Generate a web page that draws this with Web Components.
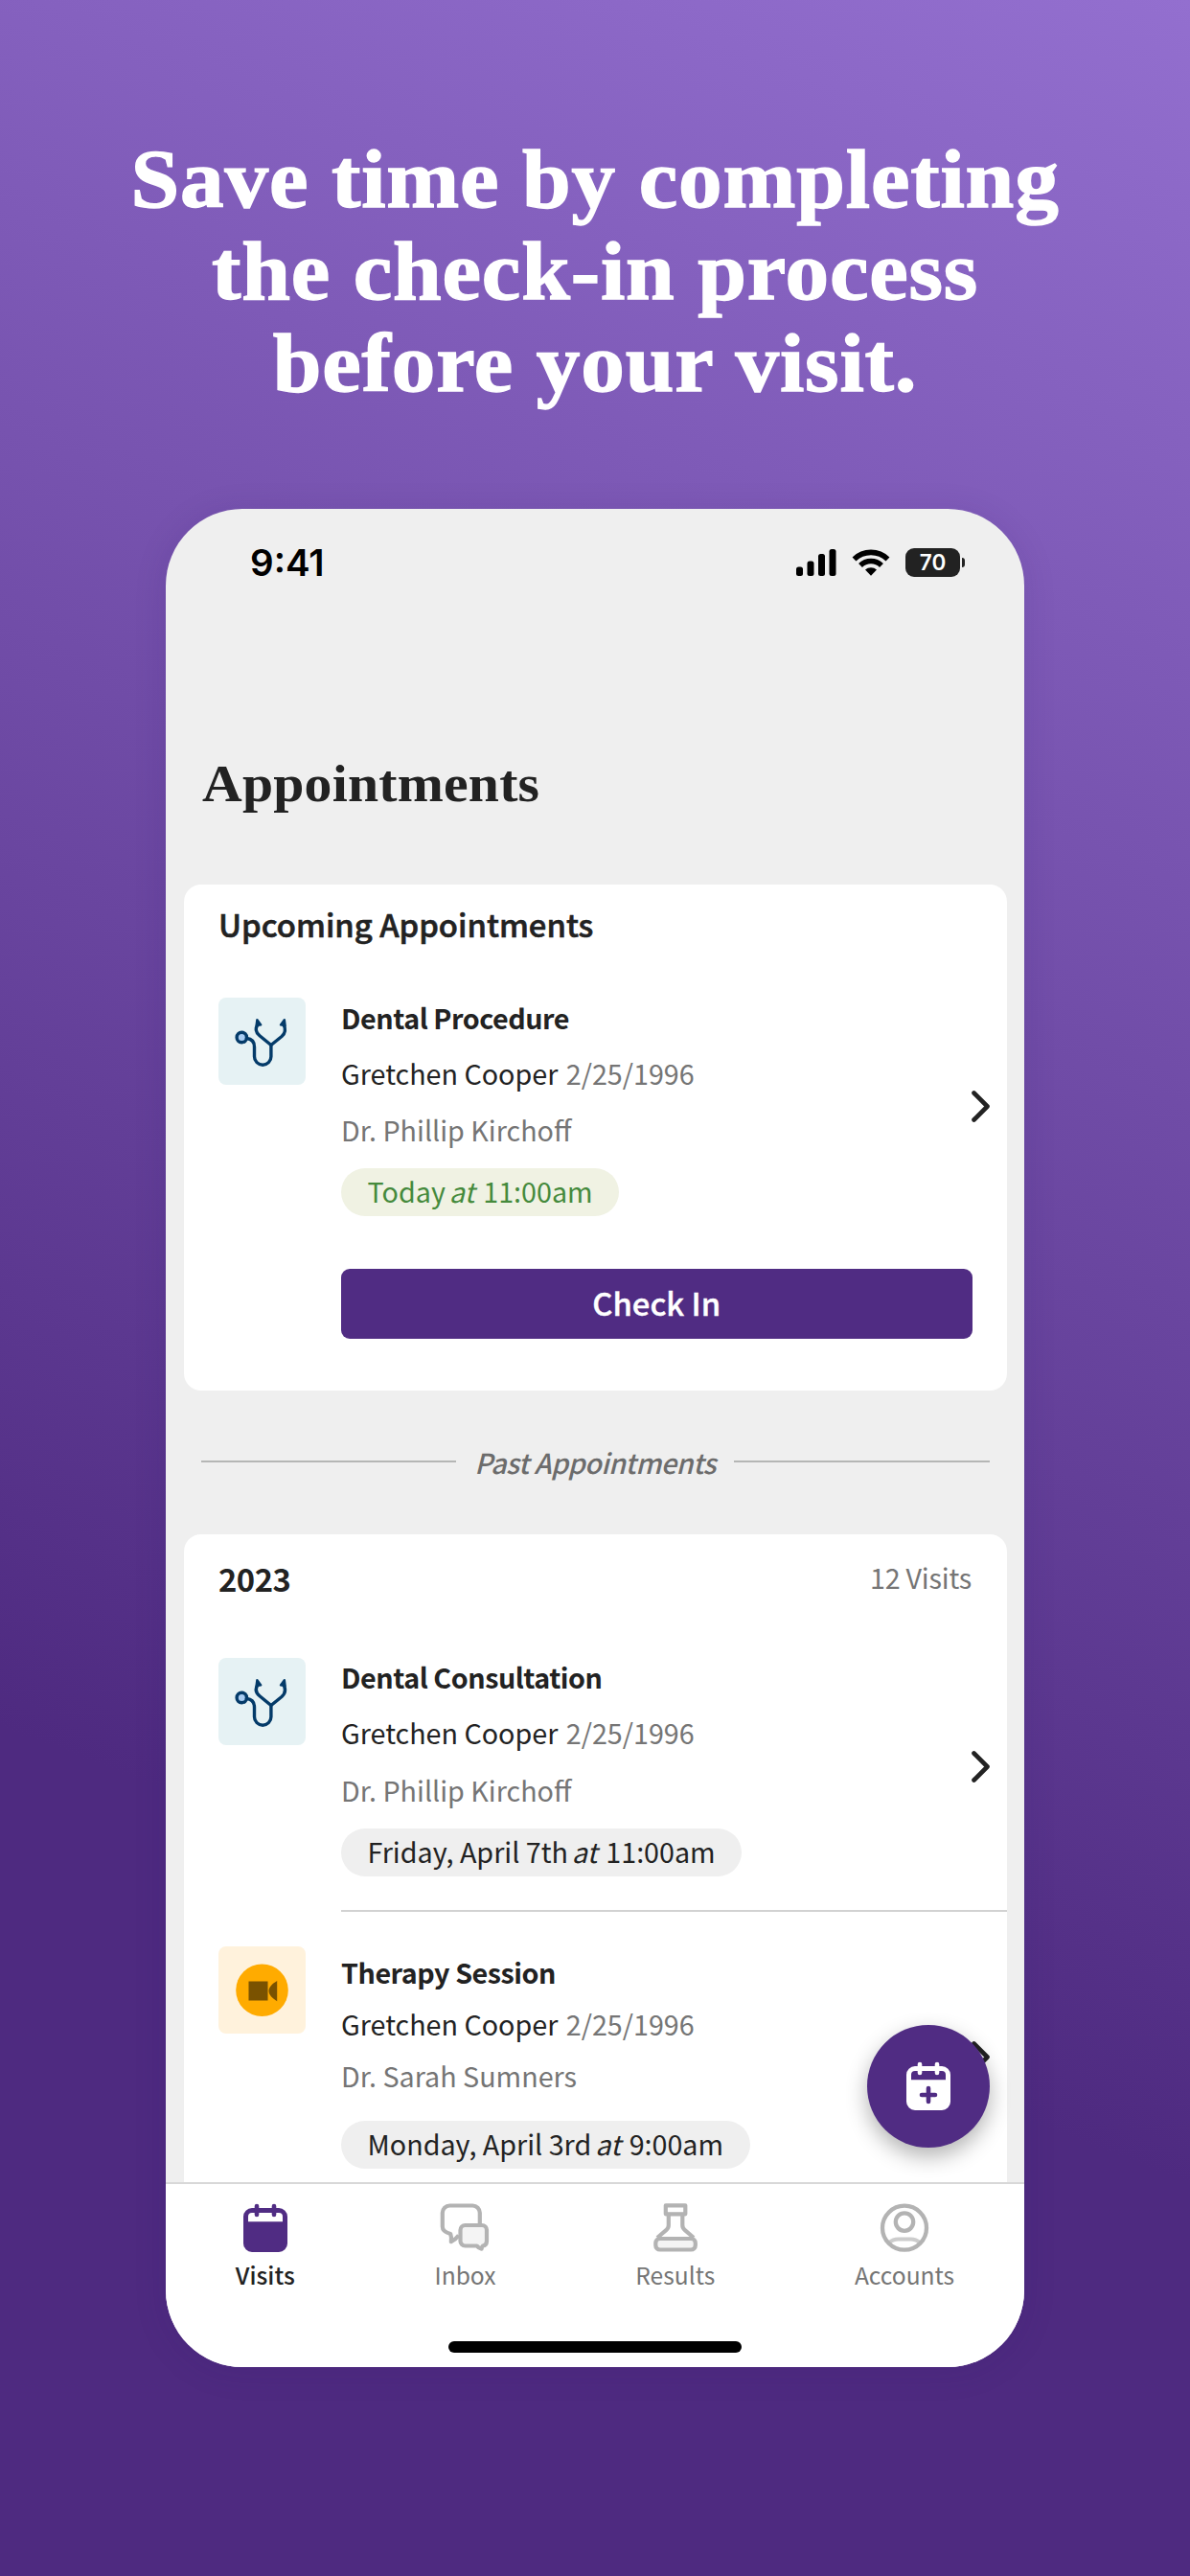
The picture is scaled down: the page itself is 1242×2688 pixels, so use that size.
<!DOCTYPE html>
<html lang="en">
<head>
<meta charset="utf-8">
<title>Appointments</title>
<style>
  body {
    margin: 0;
    font-family: "Noto Sans CJK SC", "Noto Sans CJK JP", "Open Sans", sans-serif;
  }
</style>
</head>
<body>
<promo-screen>
  <promo-headline slot="headline">Save time by completing<br>the check-in process<br>before your visit.</promo-headline>
  <phone-frame>
    <status-bar slot="status" time="9:41" battery="70"></status-bar>
    <page-title>Appointments</page-title>
    <visit-card heading="Upcoming Appointments">
      <visit-item kind="dental" name="Dental Procedure" patient="Gretchen Cooper" born="2/25/1996" doctor="Dr. Phillip Kirchoff">
        <time-pill slot="time" today>Today <i>at</i> 11:00am</time-pill>
      </visit-item>
      <action-button>Check In</action-button>
    </visit-card>
    <section-divider>Past Appointments</section-divider>
    <visit-card heading="2023" note="12 Visits" class="past">
      <visit-item kind="dental" name="Dental Consultation" patient="Gretchen Cooper" born="2/25/1996" doctor="Dr. Phillip Kirchoff">
        <time-pill slot="time">Friday, April 7th <i>at</i> 11:00am</time-pill>
      </visit-item>
      <visit-item kind="video" compact name="Therapy Session" patient="Gretchen Cooper" born="2/25/1996" doctor="Dr. Sarah Sumners">
        <time-pill slot="time">Monday, April 3rd <i>at</i> 9:00am</time-pill>
      </visit-item>
    </visit-card>
    <add-button slot="fab"></add-button>
    <tab-bar slot="tabs">
      <tab-item icon="calendar" active>Visits</tab-item>
      <tab-item icon="inbox">Inbox</tab-item>
      <tab-item icon="flask">Results</tab-item>
      <tab-item icon="person">Accounts</tab-item>
    </tab-bar>
  </phone-frame>
</promo-screen>

<script>
const calendar = `
  <path fill="currentColor" fill-rule="evenodd" d="M12 5h28a9 9 0 0 1 9 9v28a9 9 0 0 1-9 9H12a9 9 0 0 1-9-9V14a9 9 0 0 1 9-9Zm0 5a4 4 0 0 0-4 4v5.3h36V14a4 4 0 0 0-4-4Z"/>
  <path stroke="currentColor" stroke-width="4.6" stroke-linecap="round" d="M17 3v9M35 3v9"/>`;

const icons = {
  calendar,
  inbox: `
    <g stroke="currentColor" stroke-width="4.2" stroke-linejoin="round">
      <path d="M41.8 21V10a7.5 7.5 0 0 0-7.5-7.5h-24A7.5 7.5 0 0 0 2.8 10v14.5c0 4 3 6 8.4 7.5.9 2.5 1.2 5 .6 8.2 3-1.6 5.7-3.5 8-6.7"/>
      <path fill="#f4f4f4" d="M26.5 23h17.500a5 5 0 0 1 5 5v11.500a5 5 0 0 1-4 5c-1 1-1.400 1.700-1.400 3.200-2.100-.5-3.500-1.500-5-3.200H26.500a5 5 0 0 1-5-5V28a5 5 0 0 1 5-5Z"/>
    </g>`,
  flask: `
    <g stroke="currentColor" stroke-width="4.2" stroke-linejoin="round">
      <rect x="15.8" y="2.3" width="20.5" height="9"/>
      <path d="M18.8 12v11c0 2-.7 3.500-2.300 4.800L7 36M33.300 12v11c0 2 .7 3.500 2.300 4.800L45 36"/>
      <rect x="5.3" y="37" width="41.5" height="11.5" rx="4.5" fill="#f4f4f4"/>
    </g>`,
  person: `
    <path stroke="#ccc" stroke-width="4.2" d="M10.500 41c2.500-2.500 5-3.500 9-3.500h13c4 0 6.500 1 9 3.500"/>
    <circle cx="26" cy="25.7" r="23" stroke="currentColor" stroke-width="4.3"/>
    <circle cx="26" cy="19.6" r="9.2" stroke="currentColor" stroke-width="4.3"/>`
};

const tiles = {
  dental: `
    <rect x="2" y="3" width="91" height="91" rx="8" fill="#e6f2f4"/>
    <g fill="none" stroke="#043b69" stroke-width="3.4" stroke-linecap="round" stroke-linejoin="round">
      <circle cx="26.3" cy="44.5" r="5.2" fill="#a8ccf2"/>
      <path d="M31.500 45.500c5 .5 8 3.500 8 9V64.500a8.700 8.700 0 0 0 17.400 0V52.500"/>
      <path d="M43 31c-3.300 5-2 8.500 2 11.800L56.900 52.500 68 43.500c4-3.500 4.500-7.500 2-12.500"/>
      <path fill="#043b69" stroke-width="2.2" d="M42.300 26l4 5.400-4.800.8ZM70.900 26l-4 5.400 4.800.8Z"/>
    </g>`,
  video: `
    <rect x="2" y="3" width="91" height="91" rx="8" fill="#fff2dc"/>
    <circle cx="47.5" cy="48.8" r="27.3" fill="#ffab00"/>
    <path fill="#7a5200" d="M33.500 39.600h20v20h-20ZM63.200 39v21.200c-5-3-8.700-6.500-8.700-10.600s3.700-7.600 8.700-10.600Z"/>`
};

// Attaches an open shadow root holding the given markup
function render(host, css, html) {
  host.attachShadow({ mode: "open" });
  host.shadowRoot.innerHTML = `<style>${css}</style>${html}`;
}

class PromoScreen extends HTMLElement {
  connectedCallback() {
    render(this, `
      :host {
        display: flex;
        flex-direction: column;
        align-items: center;
        box-sizing: border-box;
        width: 1242px;
        height: 2688px;
        padding-top: 139px;
        overflow: hidden;
        background: linear-gradient(201deg, #936fcf, #4e2a80 72%);
      }
    `, `<slot name="headline"></slot><slot></slot>`);
  }
}

class PromoHeadline extends HTMLElement {
  connectedCallback() {
    render(this, `
      :host {
        display: block;
        height: 392px;
        color: #fff;
        font: bold 86px/96px "Liberation Serif", serif;
        letter-spacing: .8px;
        text-align: center;
        white-space: nowrap;
        transform: scaleX(1.06);
        -webkit-text-stroke: 1.4px #fff;
      }
    `, `<slot></slot>`);
  }
}

class PhoneFrame extends HTMLElement {
  connectedCallback() {
    render(this, `
      :host {
        display: flex;
        flex-direction: column;
        position: relative;
        width: 896px;
        height: 1939px;
        border-radius: 80px;
        overflow: hidden;
        background: #efefef;
        color: #222;
        box-shadow: 0 4px 34px rgba(50, 20, 100, .13);
      }
      main {
        flex: 1;
        min-height: 0;
        overflow: hidden;
        padding: 0 18.5px;
      }
    `, `
      <slot name="status"></slot>
      <main><slot></slot></main>
      <slot name="fab"></slot>
      <slot name="tabs"></slot>
    `);
  }
}

class StatusBar extends HTMLElement {
  connectedCallback() {
    render(this, `
      :host {
        display: flex;
        align-items: center;
        height: 112px;
        margin-bottom: 1px;
        padding: 0 62px 0 88px;
        color: #000;
        font-family: Inter, sans-serif;
        font-weight: 600;
      }
      .time { flex: 1; font-size: 38.5px; letter-spacing: 0; }
      svg { display: block; }
      .wifi { margin: 0 16px; }
      .battery {
        width: 57px;
        height: 30px;
        border-radius: 9px;
        background: #222;
        color: #fff;
        font-size: 22.5px;
        line-height: 30px;
        text-align: center;
      }
      .tip {
        width: 3px;
        height: 10px;
        margin-left: 2px;
        border-radius: 0 3px 3px 0;
        background: #222;
      }
    `, `
      <span class="time">${this.getAttribute("time")}</span>
      <svg width="42" height="28" viewBox="0 0 42 28">
        <rect y="18.5" width="7" height="9.5" rx="2.5"/>
        <rect x="11.5" y="12.5" width="7" height="15.5" rx="2.5"/>
        <rect x="23" y="5" width="7" height="23" rx="2.5"/>
        <rect x="34.5" width="7" height="28" rx="2.5"/>
      </svg>
      <svg class="wifi" width="40" height="28" viewBox="0 0 40 28">
        <g fill="none" stroke="#000" stroke-width="5.6">
          <path d="M2.500 10.500a25 25 0 0 1 35 0"/>
          <path d="M9 17a15.800 15.800 0 0 1 22 0"/>
        </g>
        <path d="M14 21.600a8.700 8.700 0 0 1 12 0L20 27.800Z"/>
      </svg>
      <span class="battery">${this.getAttribute("battery")}</span>
      <span class="tip"></span>
    `);
  }
}

class PageTitle extends HTMLElement {
  connectedCallback() {
    render(this, `
      :host {
        display: block;
        padding: 143.5px 0 75.2px 19px;
        font: bold 55px/60px "Liberation Serif", serif;
        letter-spacing: .2px;
      }
      span { display: inline-block; transform: scaleX(1.05); transform-origin: left; }
    `, `<span><slot></slot></span>`);
  }
}

class VisitCard extends HTMLElement {
  connectedCallback() {
    const note = this.getAttribute("note");
    render(this, `
      :host {
        display: block;
        padding: 19px 0 54.7px;
        border-radius: 18px;
        background: #fff;
      }
      :host(.past) { padding-top: 24px; }
      header {
        display: flex;
        justify-content: space-between;
        margin: 0 36.5px 55.3px;
        font-size: 32.8px;
        font-weight: 500;
        line-height: 44px;
        -webkit-text-stroke: .6px currentColor;
      }
      :host(.past) header {
        margin-bottom: 60.3px;
        font-weight: 700;
        letter-spacing: -.5px;
        -webkit-text-stroke: 0;
      }
      .note {
        color: #757575;
        font-size: 28.7px;
        font-weight: 400;
        letter-spacing: -.2px;
        line-height: 42px;
      }
    `, `
      <header>
        <span>${this.getAttribute("heading")}</span>
        ${note ? `<span class="note">${note}</span>` : ""}
      </header>
      <slot></slot>
    `);
  }
}

class VisitItem extends HTMLElement {
  connectedCallback() {
    render(this, `
      :host {
        display: grid;
        grid-template-columns: 91px 1fr 19px;
        column-gap: 37px;
        padding: 0 17.5px 0 36.5px;
        font-size: 28.7px;
        line-height: 59.3px;
        --lift: -10.5px;
      }
      :host([compact]) {
        margin-top: 35px;
        line-height: 54.6px;
        --lift: -.6px;
      }
      .rule {
        grid-column: 2 / -1;
        height: 2px;
        margin: 0 -17.5px 36px 0;
        background: #d2d2d2;
      }
      .text { margin-top: var(--lift); white-space: nowrap; }
      .name {
        margin-bottom: -1.2px;
        padding-top: 1.2px;
        font-weight: 700;
        letter-spacing: -.45px;
      }
      .born { margin-left: 2px; color: #757575; }
      .doctor { margin-bottom: 10.6px; color: #757575; }
      :host([compact]) .doctor { margin-bottom: 19.5px; }
      .chevron { align-self: center; }
      svg { display: block; }
    `, `
      ${this.hasAttribute("compact") ? `<div class="rule"></div>` : ""}
      <svg width="91" height="91" viewBox="2 3 91 91">${tiles[this.getAttribute("kind")]}</svg>
      <div class="text">
        <div class="name">${this.getAttribute("name")}</div>
        <div>${this.getAttribute("patient")} <span class="born">${this.getAttribute("born")}</span></div>
        <div class="doctor">${this.getAttribute("doctor")}</div>
        <slot name="time"></slot>
      </div>
      <svg class="chevron" width="19" height="33" viewBox="0 0 19 33">
        <path fill="none" stroke="#222" stroke-width="4.6" stroke-linecap="round" stroke-linejoin="round" d="M2.500 2.500l14 14-14 14"/>
      </svg>
    `);
  }
}

class TimePill extends HTMLElement {
  connectedCallback() {
    render(this, `
      :host {
        display: block;
        width: max-content;
        padding: 0 27.5px 2px;
        border-radius: 25px;
        background: #efefef;
        line-height: 48px;
      }
      :host([today]) { background: #f0f2e3; color: #458a3c; }
      ::slotted(i) { margin: 0 2.5px 0 -2.5px; }
    `, `<slot></slot>`);
  }
}

class ActionButton extends HTMLElement {
  connectedCallback() {
    render(this, `
      :host { display: block; margin: 54.7px 36px 0 164.5px; }
      button {
        display: block;
        width: 100%;
        height: 73px;
        padding: 0 0 2px;
        border: 0;
        border-radius: 9px;
        background: #502c83;
        color: #fff;
        font: 500 32.8px/70px "Noto Sans CJK SC", sans-serif;
        -webkit-text-stroke: .4px #fff;
      }
    `, `<button><slot></slot></button>`);
  }
}

class SectionDivider extends HTMLElement {
  connectedCallback() {
    render(this, `
      :host {
        display: flex;
        align-items: center;
        gap: 19.5px;
        height: 148px;
        padding: 0 18px 2px;
        color: #6c6c6c;
        font-size: 28.7px;
        font-style: italic;
        font-weight: 500;
        letter-spacing: -.5px;
      }
      :host::before, :host::after {
        content: "";
        flex: 1;
        height: 2.3px;
        background: #b5b6b5;
      }
    `, `<slot></slot>`);
  }
}

class AddButton extends HTMLElement {
  connectedCallback() {
    render(this, `
      :host {
        position: absolute;
        right: 36px;
        bottom: 229.5px;
        display: grid;
        place-items: center;
        width: 128px;
        height: 128px;
        border-radius: 50%;
        background: #502c83;
        color: #fff;
        box-shadow: 0 9px 22px rgba(0, 0, 0, .3);
      }
    `, `
      <svg width="52" height="52" viewBox="0 0 52 52" fill="none">
        ${icons.calendar}
        <path stroke="#502c83" stroke-width="4.6" stroke-linecap="round" d="M26 28v14M19 35h14"/>
      </svg>
    `);
  }
}

class TabBar extends HTMLElement {
  connectedCallback() {
    render(this, `
      :host {
        display: flex;
        flex-direction: column;
        justify-content: space-between;
        align-items: center;
        box-sizing: border-box;
        height: 193px;
        padding: 20px 0 15px;
        border-top: 2px solid #d8d8d8;
        background: #fff;
      }
      nav { display: flex; justify-content: space-around; width: 100%; }
      .home { width: 306px; height: 12px; border-radius: 6px; background: #000; }
    `, `<nav><slot></slot></nav><div class="home"></div>`);
  }
}

class TabItem extends HTMLElement {
  connectedCallback() {
    render(this, `
      :host {
        display: flex;
        flex-direction: column;
        align-items: center;
        gap: 4.5px;
        color: #757575;
        font-size: 24.6px;
        line-height: 34px;
      }
      :host([active]) { color: #222; font-weight: 500; }
      svg { display: block; color: #b3b3b3; }
      :host([active]) svg { color: #502c83; }
    `, `
      <svg width="52" height="52" viewBox="0 0 52 52" fill="none">${icons[this.getAttribute("icon")]}</svg>
      <span><slot></slot></span>
    `);
  }
}

customElements.define("promo-screen", PromoScreen);
customElements.define("promo-headline", PromoHeadline);
customElements.define("phone-frame", PhoneFrame);
customElements.define("status-bar", StatusBar);
customElements.define("page-title", PageTitle);
customElements.define("visit-card", VisitCard);
customElements.define("visit-item", VisitItem);
customElements.define("time-pill", TimePill);
customElements.define("action-button", ActionButton);
customElements.define("section-divider", SectionDivider);
customElements.define("add-button", AddButton);
customElements.define("tab-bar", TabBar);
customElements.define("tab-item", TabItem);
</script>
</body>
</html>
